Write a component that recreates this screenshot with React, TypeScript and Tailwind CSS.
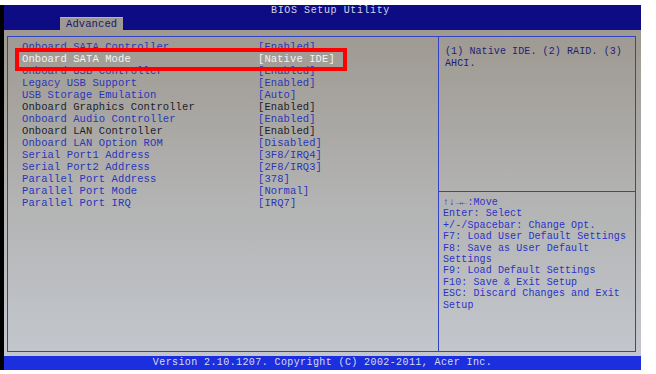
const mono = { fontFamily: '"Liberation Mono", "DejaVu Sans Mono", monospace' };

type Row = { label: string; value: string; tone: "blue" | "dark" | "sel" };

const rows: Row[] = [
  { label: "Onboard SATA Controller", value: "[Enabled]", tone: "blue" },
  { label: "Onboard SATA Mode", value: "[Native IDE]", tone: "sel" },
  { label: "Onboard USB Controller", value: "[Enabled]", tone: "blue" },
  { label: "Legacy USB Support", value: "[Enabled]", tone: "blue" },
  { label: "USB Storage Emulation", value: "[Auto]", tone: "blue" },
  { label: "Onboard Graphics Controller", value: "[Enabled]", tone: "dark" },
  { label: "Onboard Audio Controller", value: "[Enabled]", tone: "blue" },
  { label: "Onboard LAN Controller", value: "[Enabled]", tone: "dark" },
  { label: "Onboard LAN Option ROM", value: "[Disabled]", tone: "blue" },
  { label: "Serial Port1 Address", value: "[3F8/IRQ4]", tone: "blue" },
  { label: "Serial Port2 Address", value: "[2F8/IRQ3]", tone: "blue" },
  { label: "Parallel Port Address", value: "[378]", tone: "blue" },
  { label: "Parallel Port Mode", value: "[Normal]", tone: "blue" },
  { label: "Parallel Port IRQ", value: "[IRQ7]", tone: "blue" },
];

const toneClass = {
  blue: "text-[#2a36b8]",
  dark: "text-[#1d1d2a]",
  sel: "text-[#f4f4f6]",
};

const keys = [
  "↑↓→←:Move",
  "Enter: Select",
  "+/-/Spacebar: Change Opt.",
  "F7: Load User Default Settings",
  "F8: Save as User Default",
  "Settings",
  "F9: Load Default Settings",
  "F10: Save & Exit Setup",
  "ESC: Discard Changes and Exit",
  "Setup",
];

export default function App() {
  return (
    <div className="relative w-[656px] h-[374px] bg-white overflow-hidden pt-[5px]" style={mono}>
      <div className="w-[641px] h-[365px] flex flex-col border-l-4 border-black bg-black">
        {/* header */}
        <div className="h-[25px] bg-[#0e0c84] flex flex-col">
          <div className="h-[13px] flex justify-center items-end pl-[16px] text-[10px] leading-[12px] tracking-[0.6px] text-[#d4d6ea]">
            BIOS Setup Utility
          </div>
          <div className="flex-1 flex items-end pl-[56px]">
            <div className="h-[13px] px-[6px] bg-[#9e9992] border-t border-[#b8b4ae] text-[10.5px] leading-[12px] tracking-[0.1px] text-[#17186e]">
              Advanced
            </div>
          </div>
        </div>

        {/* main */}
        <div className="flex-1 bg-linear-to-b from-[#9e9991] via-[#b2b2b2] to-[#c3c7cd] pt-[6px] pb-[4px] pl-[3px] pr-[5px]">
          <div className="h-full flex border border-[#3442c4]">
            <div className="w-[430px] pt-[4px] pl-[14px]">
              {rows.map((r) => (
                <div
                  key={r.label}
                  className={`flex h-[12px] text-[10.5px] leading-[12px] tracking-[0.1px] ${toneClass[r.tone]}`}
                >
                  <span className="w-[236px] whitespace-pre">{r.label}</span>
                  <span className="whitespace-pre">{r.value}</span>
                </div>
              ))}
            </div>
            <div className="flex-1 flex flex-col border-l border-[#3442c4]">
              <div className="h-[155px] border-b border-[#3442c4] pt-[9px] pl-[6px] text-[10px] leading-[12px] tracking-[0.1px] text-[#1c1f78]">
                <div>(1) Native IDE. (2) RAID. (3)</div>
                <div>AHCI.</div>
              </div>
              <div className="pt-[5px] pl-[4px] text-[10px] leading-[11.4px] tracking-[0.1px] text-[#2a32c6]">
                {keys.map((k, i) => (
                  <div key={i} className="whitespace-pre">{k}</div>
                ))}
              </div>
            </div>
          </div>
        </div>

        {/* footer */}
        <div className="h-[14px] bg-[#1b2fde] flex justify-center items-center text-[10px] leading-[12px] tracking-[0.4px] text-[#d8dcf2]">
          Version 2.10.1207. Copyright (C) 2002-2011, Acer Inc.
        </div>
      </div>

      {/* red highlight drawn over the screenshot */}
      <div className="absolute left-[15px] top-[48px] w-[332px] h-[23px] border-4 border-[#ff0000]" />
    </div>
  );
}
